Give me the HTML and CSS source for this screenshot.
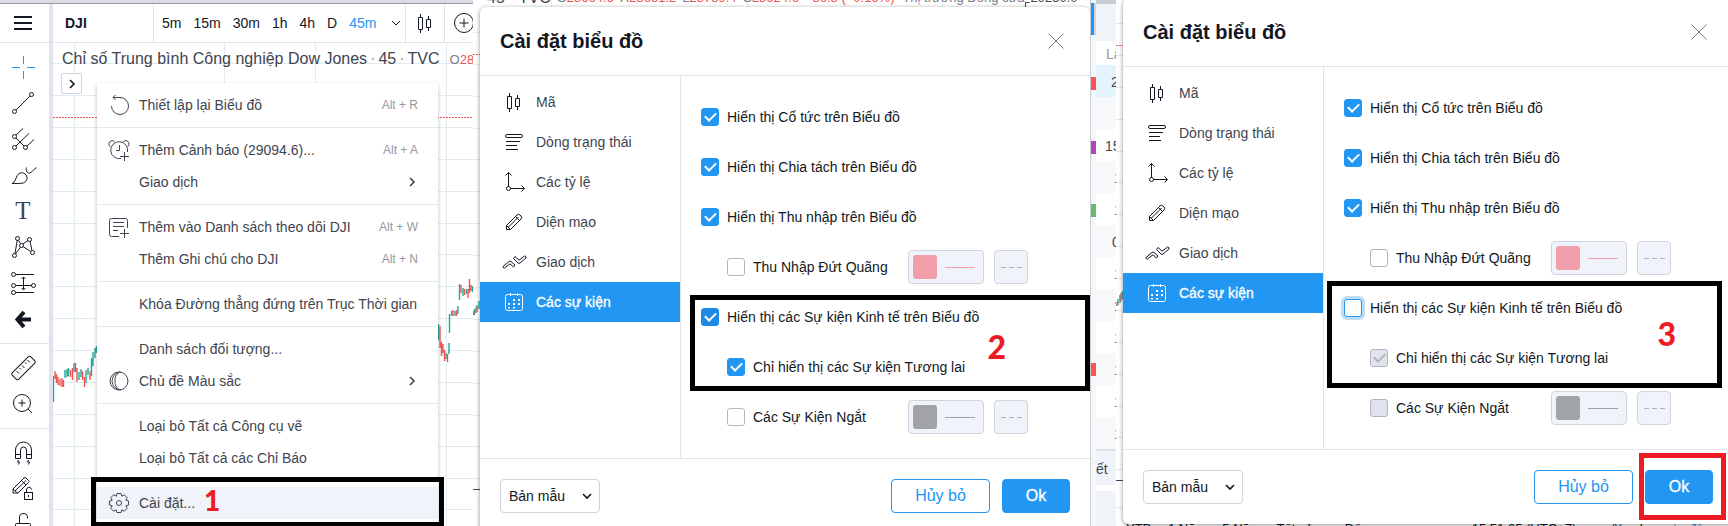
FILE: index.html
```html
<!DOCTYPE html>
<html lang="vi">
<head>
    <meta charset="UTF-8">
    <meta name="viewport" content="width=device-width, initial-scale=1.0">
    <title>Cài đặt biểu đồ</title>
    <link rel="stylesheet" href="styles.css">
</head>
<body>
    <!-- Icons -->
    <svg class="sprite" aria-hidden="true">
        <symbol id="i-candles" viewBox="0 0 28 28"><path d="M7.5 8.5h4v12h-4zM9.5 5v3.5M9.5 20.5V24M15.5 10.5h4v8h-4zM17.5 7v3.5M17.5 18.5V22"/></symbol>
        <symbol id="i-status" viewBox="0 0 28 28"><rect x="5.5" y="6.5" width="17" height="3" rx="1.5"/><path d="M6 13.5h14M6 17.5h11M6 21.5h12"/></symbol>
        <symbol id="i-scales" viewBox="0 0 28 28"><circle cx="8.5" cy="20.5" r="2"/><path d="M8.5 18.5V4.5M5.5 7.5l3-3 3 3M10.5 20.5h14M21.5 17.5l3 3-3 3"/></symbol>
        <symbol id="i-pencil" viewBox="0 0 28 28"><path d="M6.5 17.5L17 7q1.500-1.500 3 0l1 1q1.500 1.500 0 3L10.500 21.500H6.500zM8.500 19L18.500 9M15.500 8.500l4 4M6.500 17.500l4 4"/></symbol>
        <symbol id="i-trade" viewBox="0 0 28 28"><path d="M3 18.500l6-5q1-.8 2 0l4 3.500-1.500 2-3.500-3.200-5.500 4.200q-2 0-1.500-1.500zM13.500 10.500l1.500-2 4 3.700 5.500-4.200q2 0 1.500 2l-6 5q-1 .8-2 0z"/></symbol>
        <symbol id="i-calendar" viewBox="0 0 28 28"><rect x="5.500" y="6.500" width="17" height="16" rx="2"/><path d="M10.500 5v3M17.500 5v3"/><path class="dots" d="M13 11h2v2h-2zM18 11h2v2h-2zM8 15h2v2H8zM13 15h2v2h-2zM18 15h2v2h-2zM8 19h2v1.500H8zM13 19h2v1.500h-2z"/></symbol>
        <symbol id="i-down" viewBox="0 0 12 12"><path d="M2 4l4 4 4-4"/></symbol>
        <symbol id="i-right" viewBox="0 0 12 12"><path d="M4 2l4 4-4 4"/></symbol>
        <symbol id="i-close" viewBox="0 0 18 18"><path d="M1.500 1.500l15 15M16.500 1.500l-15 15"/></symbol>
        <symbol id="i-plus" viewBox="0 0 28 28"><circle cx="14" cy="14" r="9.500"/><path d="M14 9.500v9M9.500 14h9"/></symbol>

        <symbol id="i-cross" viewBox="0 0 28 28"><path d="M3 14.500h8M18 14.500h8M14.500 3v8M14.500 18v8"/></symbol>
        <symbol id="i-line" viewBox="0 0 28 28"><circle cx="5.500" cy="22.500" r="2"/><circle cx="22.500" cy="5.500" r="2"/><path d="M7 21L21 7"/></symbol>
        <symbol id="i-fork" viewBox="0 0 28 28"><circle cx="5.500" cy="11.500" r="2"/><circle cx="5.500" cy="22.500" r="2"/><circle cx="16.500" cy="22.500" r="2"/><path d="M7 10l7-6.500M7 21L20 8.500M18 21l7-6.500M7 13l8 8"/></symbol>
        <symbol id="i-brush" viewBox="0 0 28 28"><path d="M3 22.500c3-1.500 3.500-4 4.500-6.500C9 12 13 10.500 16 13s2.500 6 0 8c-2 1.700-5 1.500-13 1.500zM17.500 6.500c-1 3 .5 6 3 5.500s3-2.500 7-5.500"/></symbol>
        <symbol id="i-pattern" viewBox="0 0 28 28"><circle cx="8.500" cy="5.500" r="2"/><circle cx="20.500" cy="6.500" r="2"/><circle cx="12.500" cy="12.500" r="2"/><circle cx="5.500" cy="22.500" r="2"/><circle cx="23.500" cy="19.500" r="2"/><path d="M8.200 7.500L6 20.500M9.500 7.200l2 3.500M14 11l5-3.500M21 8.500l2 9M14.200 13.700l7.500 4.700M11.500 14.300l-5 6.500"/></symbol>
        <symbol id="i-range" viewBox="0 0 28 28"><circle cx="4.500" cy="5.500" r="2"/><circle cx="4.500" cy="16.500" r="2"/><circle cx="24.500" cy="16.500" r="2"/><circle cx="4.500" cy="23.500" r="2"/><path d="M6.500 5.500H25M6.500 16.500h16M6.500 23.500H25M14.500 8v12M12.500 10l2-2 2 2M12.500 19l2 2 2-2"/></symbol>
        <symbol id="i-back" viewBox="0 0 28 28"><path stroke-width="4" d="M22 14.500H9M15 7l-6.500 7.500L15 22"/></symbol>
        <symbol id="i-ruler" viewBox="0 0 28 28"><rect x="1.500" y="9.500" width="26" height="9" rx="1.500" transform="rotate(-45 14.500 14)"/><path d="M7.500 17l2.500 2.500M10.500 14l1.500 1.500M13 11.500l2.500 2.500M16 8.500l1.500 1.500M18.500 6l2.500 2.500"/></symbol>
        <symbol id="i-zoom" viewBox="0 0 28 28"><circle cx="13" cy="13" r="8.500"/><path d="M19 19l4 4M13 9.500v7M9.500 13h7"/></symbol>
        <symbol id="i-magnet" viewBox="0 0 28 28"><path d="M6.500 19.500V11a8 8 0 0 1 16 0v8.500h-5V11a3 3 0 0 0-6 0v8.500zM6.500 15.500h5M17.500 15.500h5M9.500 21l-1 2h2l-1 2.500M19.500 21l-1 2h2l-1 2.500"/></symbol>
        <symbol id="i-penlock" viewBox="0 0 28 28"><path d="M4 14L15 3q1-1 2 0l2.500 2.500q1 1 0 2L9 18H4zM6 16L17 5.500M4 14l4.500 4M12.500 5.500l4.500 4.500"/><rect x="15.500" y="17.500" width="8" height="7"/><path d="M17.500 17.500V15a2.500 2.500 0 0 1 5-.5M19.500 20v2"/></symbol>
        <symbol id="i-lock" viewBox="0 0 28 28"><rect x="6.500" y="12.500" width="15" height="11" rx="1"/><path d="M10.500 12.500V7a4 4 0 0 1 8-1v1.500"/></symbol>

        <symbol id="i-reset" viewBox="0 0 28 28"><path d="M8 6.500h7a8.500 8.500 0 1 1-8.500 8.500M10.500 4L8 6.500 10.500 9"/></symbol>
        <symbol id="i-alarm" viewBox="0 0 28 28"><path d="M16 22.500A8.500 8.500 0 1 1 22.500 16M14.500 9v5.500H11M5 10.500a3.300 3.300 0 1 1 4.500-5M18.500 5.500a3.300 3.300 0 1 1 4.500 5M19.500 16v9M15 20.500h9"/></symbol>
        <symbol id="i-list" viewBox="0 0 28 28"><path d="M14 23.500H6.500q-2 0-2-2v-14q0-2 2-2h14q2 0 2 2V15M8 9.500h11M8 13.500h11M8 17.500h5M19.500 16v9M15 20.500h9"/></symbol>
        <symbol id="i-theme" viewBox="0 0 28 28"><circle cx="14" cy="14" r="9"/><path d="M16 5a9 9 0 0 0 0 18M14 5.500a9 9 0 0 0-4 8.500 9 9 0 0 0 4 8.500"/></symbol>
        <symbol id="i-gear" viewBox="0 0 28 28"><circle cx="14" cy="14" r="2.500"/><path d="M12 4.500h4l.8 2.700 2.500-1.400 2.900 2.900-1.400 2.500 2.700.8v4l-2.700.8 1.400 2.500-2.900 2.900-2.500-1.400-.8 2.700h-4l-.8-2.700-2.500 1.400-2.900-2.900 1.400-2.500-2.700-.8v-4l2.700-.8-1.400-2.500 2.900-2.900 2.500 1.400z"/></symbol>
    </svg>

    <main class="steps">
        <!-- Step 1: context menu -->
        <section class="step step-menu">
            <div class="window-edge"></div>
            <div class="app">
                <aside class="tools">
                    <button class="menu-btn" aria-label="Menu"><span></span><span></span><span></span></button>
                    <div class="tool-group">
                        <button class="tool active" aria-label="Con trỏ"><svg class="icon"><use href="#i-cross"/></svg></button>
                        <button class="tool" aria-label="Đường xu hướng"><svg class="icon"><use href="#i-line"/></svg></button>
                        <button class="tool" aria-label="Pitchfork"><svg class="icon"><use href="#i-fork"/></svg></button>
                        <button class="tool" aria-label="Bút vẽ"><svg class="icon"><use href="#i-brush"/></svg></button>
                        <button class="tool tool-text">T</button>
                        <button class="tool" aria-label="Mẫu hình"><svg class="icon"><use href="#i-pattern"/></svg></button>
                        <button class="tool" aria-label="Dự báo"><svg class="icon"><use href="#i-range"/></svg></button>
                        <button class="tool" aria-label="Quay lại"><svg class="icon"><use href="#i-back"/></svg></button>
                    </div>
                    <div class="tool-group">
                        <button class="tool" aria-label="Thước đo"><svg class="icon"><use href="#i-ruler"/></svg></button>
                        <button class="tool" aria-label="Phóng to"><svg class="icon"><use href="#i-zoom"/></svg></button>
                    </div>
                    <div class="tool-group">
                        <button class="tool" aria-label="Nam châm"><svg class="icon"><use href="#i-magnet"/></svg></button>
                        <button class="tool" aria-label="Giữ chế độ vẽ"><svg class="icon"><use href="#i-penlock"/></svg></button>
                        <button class="tool" aria-label="Khóa"><svg class="icon"><use href="#i-lock"/></svg></button>
                    </div>
                </aside>

                <div class="workspace">
                    <header class="topbar">
                        <div class="symbol">DJI</div>
                        <nav class="intervals">
                            <a href="#">5m</a>
                            <a href="#">15m</a>
                            <a href="#">30m</a>
                            <a href="#">1h</a>
                            <a href="#">4h</a>
                            <a href="#">D</a>
                            <a href="#" class="current">45m</a>
                            <svg class="icon-small"><use href="#i-down"/></svg>
                        </nav>
                        <button class="topbar-btn" aria-label="Kiểu nến"><svg class="icon"><use href="#i-candles"/></svg></button>
                        <button class="topbar-btn compare" aria-label="So sánh"><svg class="icon"><use href="#i-plus"/></svg></button>
                    </header>

                    <div class="chart">
                        <svg class="chart-canvas" width="420" height="483" viewBox="53 43 420 483" aria-hidden="true">
                            <path class="grid" d="M53 63.500h420M53 95.500h420M53 127.500h420M53 159.500h420M53 191.500h420M53 223.500h420M53 254.500h420M53 286.500h420M53 318.500h420M53 350.500h420M53 382.500h420M53 414.500h420M53 446.500h420M53 478.500h420M53 509.500h420M74.500 43v483M224.500 43v483M315.500 43v483M446.500 43v483"/>
                            <path class="price-line" d="M53 117.500h420"/>
                            <path class="up" d="M53.500 376v26M65 370v8M67 369v8M68.500 368v8M74 363v9M79 372v8M81 369v8M86 370v13M88 368v7M91.500 358v18M93 352v14M95 348v10M96.500 346v7M438.500 324v16M446 353v6M449 343v11M449.500 314v19M451.500 311v5M455 311v5M458 306v8M459.500 284v16M463 288v8M466.500 289v5M472.500 286v6"/>
                            <path class="down" d="M55 371v8M56.500 374v9M58 377v8M60 379v7M62 378v9M63.500 380v7M70.500 370v7M72.500 368v12M75.500 363v9M77 368v14M82.500 371v9M84.500 377v10M90 371v9M440 326v22M441.500 342v14M443 344v9M444.500 350v11M447.500 354v8M453 310v6M456.500 310v6M461 285v8M464.500 289v6M468 289v9M469.500 279v14M471 285v6"/>
                        </svg>
                        <div class="legend">
                            <span>Chỉ số Trung bình Công nghiệp Dow Jones<i>·</i>45<i>·</i>TVC</span>
                            <span class="ohlc">O<b>28</b></span>
                        </div>
                        <button class="expand" aria-label="Mở rộng"><svg class="icon-small"><use href="#i-right"/></svg></button>
                    </div>
                </div>
            </div>

            <ul class="context-menu">
                <li><svg class="icon"><use href="#i-reset"/></svg><span>Thiết lập lại Biểu đồ</span><kbd>Alt + R</kbd></li>
                <li class="divider"></li>
                <li><svg class="icon"><use href="#i-alarm"/></svg><span>Thêm Cảnh báo (29094.6)...</span><kbd>Alt + A</kbd></li>
                <li><span>Giao dịch</span><svg class="icon-small"><use href="#i-right"/></svg></li>
                <li class="divider"></li>
                <li><svg class="icon"><use href="#i-list"/></svg><span>Thêm vào Danh sách theo dõi DJI</span><kbd>Alt + W</kbd></li>
                <li><span>Thêm Ghi chú cho DJI</span><kbd>Alt + N</kbd></li>
                <li class="divider"></li>
                <li><span>Khóa Đường thẳng đứng trên Trục Thời gian</span></li>
                <li class="divider"></li>
                <li><span>Danh sách đối tượng...</span></li>
                <li><svg class="icon"><use href="#i-theme"/></svg><span>Chủ đề Màu sắc</span><svg class="icon-small"><use href="#i-right"/></svg></li>
                <li class="divider"></li>
                <li><span>Loại bỏ Tất cả Công cụ vẽ</span></li>
                <li><span>Loại bỏ Tất cả các Chỉ Báo</span></li>
                <li class="divider"></li>
                <li class="hovered"><svg class="icon"><use href="#i-gear"/></svg><span>Cài đặt...</span></li>
            </ul>
            <div class="marker marker-1"><strong>1</strong></div>
        </section>

        <!-- Step 2: events are shown -->
        <section class="step step-on">
            <svg class="strip" width="623" height="526" viewBox="473 0 623 526" aria-hidden="true">
                <path class="grid" d="M473 32.500h7M473 64.500h7M473 96.500h7M473 128.500h7M473 159.500h7M473 191.500h7M473 223.500h7M473 255.500h7M473 287.500h7M473 319.500h7M473 351.500h7M473 383.500h7M473 415.500h7M473 446.500h7M473 478.500h7M551.500 0v8M662.500 0v8M747.500 0v8M843.500 0v8M942.500 0v8"/>
                <path class="price-line" d="M473 54.500h7"/>
                <path class="axis" d="M473 489.500h7M1025.500 8V2.500h4"/>
                <path class="up" d="M474.500 309v6M477 305v7M479 301v8"/>
                <path class="down" d="M473.500 311v4M476 307v6"/>
            </svg>
            <div class="quote">
                <span class="quote-symbol">45 · TVC</span>
                <span>O<b>28664.6</b></span>
                <span>H<b>28681.2</b></span>
                <span>L<b>28789.4</b></span>
                <span>C<b>28624.6</b></span>
                <span><b>−86.8 (−0.16%)</b></span>
                <span class="quote-state">• Thị trường Đóng cửa</span>
                <span class="quote-price">29250.0</span>
            </div>

            <div class="dialog">
                <header class="dialog-header">
                    <h2>Cài đặt biểu đồ</h2>
                    <button class="close" aria-label="Đóng"><svg><use href="#i-close"/></svg></button>
                </header>
                <div class="dialog-body">
                    <nav class="tabs">
                        <a href="#"><svg class="icon"><use href="#i-candles"/></svg>Mã</a>
                        <a href="#"><svg class="icon"><use href="#i-status"/></svg>Dòng trạng thái</a>
                        <a href="#"><svg class="icon"><use href="#i-scales"/></svg>Các tỷ lệ</a>
                        <a href="#"><svg class="icon"><use href="#i-pencil"/></svg>Diện mạo</a>
                        <a href="#"><svg class="icon"><use href="#i-trade"/></svg>Giao dịch</a>
                        <a href="#" class="selected"><svg class="icon"><use href="#i-calendar"/></svg>Các sự kiện</a>
                    </nav>
                    <div class="options">
                        <div class="option"><label><input type="checkbox" checked>Hiển thị Cổ tức trên Biểu đồ</label></div>
                        <div class="option"><label><input type="checkbox" checked>Hiển thị Chia tách trên Biểu đồ</label></div>
                        <div class="option"><label><input type="checkbox" checked>Hiển thị Thu nhập trên Biểu đồ</label></div>
                        <div class="option nested">
                            <label><input type="checkbox">Thu Nhập Đứt Quãng</label>
                            <button class="color pink" aria-label="Màu"><span></span></button>
                            <button class="dash" aria-label="Kiểu đường"></button>
                        </div>
                        <div class="option"><label><input type="checkbox" class="hover" checked>Hiển thị các Sự kiện Kinh tế trên Biểu đồ</label></div>
                        <div class="option nested"><label><input type="checkbox" checked>Chỉ hiển thị các Sự kiện Tương lai</label></div>
                        <div class="option nested">
                            <label><input type="checkbox">Các Sự Kiện Ngắt</label>
                            <button class="color gray" aria-label="Màu"><span></span></button>
                            <button class="dash" aria-label="Kiểu đường"></button>
                        </div>
                        <div class="marker marker-2"><strong>2</strong></div>
                    </div>
                </div>
                <footer class="dialog-footer">
                    <div class="template">
                        <select aria-label="Bản mẫu"><option>Bản mẫu</option></select>
                        <svg class="icon-small"><use href="#i-down"/></svg>
                    </div>
                    <button class="btn">Hủy bỏ</button>
                    <button class="btn btn-primary">Ok</button>
                </footer>
            </div>

            <div class="labels">
                <i class="scroll"></i>
                <i class="label red"></i>
                <i class="label purple"></i>
                <i class="label green"></i>
                <i class="label red low"></i>
            </div>
        </section>

        <!-- Step 3: events are hidden, confirm with Ok -->
        <section class="step step-off">
            <div class="watchlist">
                <div class="watch-head"></div>
                <div class="watch-title">La</div>
                <div class="watch-row current">2</div>
                <div class="watch-row"></div>
                <div class="watch-row wide">15</div>
                <div class="watch-row">1</div>
                <div class="watch-row">1</div>
                <div class="watch-row zero">0</div>
                <div class="watch-row">1</div>
                <div class="watch-row">1</div>
                <div class="watch-row">1</div>
                <div class="watch-row">1</div>
                <div class="watch-row">1</div>
                <div class="watch-row">1</div>
                <div class="watch-detail"><span>ết</span></div>
                <div class="watch-rest"></div>
            </div>
            <svg class="strip-narrow" width="7" height="526" viewBox="1116 0 7 526" aria-hidden="true">
                <path class="grid" d="M1116 23.500h7M1116 55.500h7M1116 87.500h7M1116 119.500h7M1116 151.500h7M1116 182.500h7M1116 214.500h7M1116 246.500h7M1116 278.500h7M1116 310.500h7M1116 342.500h7M1116 374.500h7M1116 406.500h7M1116 437.500h7M1116 469.500h7M1116 507.500h7"/>
                <path class="price-line" d="M1116 45.500h7"/>
                <path class="axis" d="M1116 480.500h7"/>
                <path class="up" d="M1118 299v6M1120 295v8M1122.500 291v8"/>
                <path class="down" d="M1117 302v4M1121 293v8"/>
            </svg>

            <div class="dialog">
                <header class="dialog-header">
                    <h2>Cài đặt biểu đồ</h2>
                    <button class="close" aria-label="Đóng"><svg><use href="#i-close"/></svg></button>
                </header>
                <div class="dialog-body">
                    <nav class="tabs">
                        <a href="#"><svg class="icon"><use href="#i-candles"/></svg>Mã</a>
                        <a href="#"><svg class="icon"><use href="#i-status"/></svg>Dòng trạng thái</a>
                        <a href="#"><svg class="icon"><use href="#i-scales"/></svg>Các tỷ lệ</a>
                        <a href="#"><svg class="icon"><use href="#i-pencil"/></svg>Diện mạo</a>
                        <a href="#"><svg class="icon"><use href="#i-trade"/></svg>Giao dịch</a>
                        <a href="#" class="selected"><svg class="icon"><use href="#i-calendar"/></svg>Các sự kiện</a>
                    </nav>
                    <div class="options">
                        <div class="option"><label><input type="checkbox" checked>Hiển thị Cổ tức trên Biểu đồ</label></div>
                        <div class="option"><label><input type="checkbox" checked>Hiển thị Chia tách trên Biểu đồ</label></div>
                        <div class="option"><label><input type="checkbox" checked>Hiển thị Thu nhập trên Biểu đồ</label></div>
                        <div class="option nested">
                            <label><input type="checkbox">Thu Nhập Đứt Quãng</label>
                            <button class="color pink" aria-label="Màu"><span></span></button>
                            <button class="dash" aria-label="Kiểu đường"></button>
                        </div>
                        <div class="option"><label><input type="checkbox" class="focused">Hiển thị các Sự kiện Kinh tế trên Biểu đồ</label></div>
                        <div class="option nested"><label><input type="checkbox" checked disabled>Chỉ hiển thị các Sự kiện Tương lai</label></div>
                        <div class="option nested">
                            <label><input type="checkbox" disabled>Các Sự Kiện Ngắt</label>
                            <button class="color gray" aria-label="Màu"><span></span></button>
                            <button class="dash" aria-label="Kiểu đường"></button>
                        </div>
                        <div class="marker marker-3"><strong>3</strong></div>
                    </div>
                </div>
                <footer class="dialog-footer">
                    <div class="template">
                        <select aria-label="Bản mẫu"><option>Bản mẫu</option></select>
                        <svg class="icon-small"><use href="#i-down"/></svg>
                    </div>
                    <button class="btn">Hủy bỏ</button>
                    <button class="btn btn-primary">Ok</button>
                    <div class="marker marker-ok"></div>
                </footer>
            </div>

            <div class="ranges">
                <span>YTD</span>
                <span>1 Năm</span>
                <span>5 Năm</span>
                <span>Tất cả</span>
                <span class="to">Đến</span>
                <span class="clock">15:51:25 (UTC+7)</span>
                <span class="percent">%</span>
                <span>log</span>
                <span class="auto">tự động</span>
            </div>
        </section>
    </main>
</body>
</html>
```

FILE: styles.css
```css
:root {
    --blue: #2196f3;
    --red: #ed1c24;
    --text: #131722;
    --text-soft: #40444f;
    --text-muted: #9598a1;
    --border: #e0e3eb;
    --border-dark: #d1d4dc;
    --grid: #e1ecf2;
    --hover: #f0f3fa;
    --up: #26a69a;
    --down: #ef5350;
}

* {
    margin: 0;
    padding: 0;
    box-sizing: border-box;
}

body {
    font-family: "Liberation Sans", Arial, sans-serif;
    font-size: 14px;
    line-height: 20px;
    color: var(--text);
    background: #fff;
    height: 100vh;
    overflow: hidden;
}

button {
    font: inherit;
    color: inherit;
    background: none;
    border: none;
}

a {
    color: inherit;
    text-decoration: none;
}

svg {
    display: block;
    fill: none;
    stroke: currentColor;
}

.sprite {
    position: absolute;
    width: 0;
    height: 0;
}

.icon {
    width: 28px;
    height: 28px;
    flex-shrink: 0;
}

.icon-small {
    width: 12px;
    height: 12px;
    flex-shrink: 0;
    stroke-width: 1.6;
}

.dots {
    fill: currentColor;
    stroke: none;
}

.steps {
    display: grid;
    grid-template-columns: 473fr 623fr 632fr;
    height: 100%;
}

.step {
    position: relative;
    overflow: hidden;
    min-width: 0;
    height: 100vh;
}

/* Chart drawing */
.grid { stroke: var(--grid); }
.up { stroke: var(--up); stroke-width: 1.4; }
.down { stroke: var(--down); stroke-width: 1.4; }
.axis { stroke: #434651; }

.price-line {
    stroke: var(--down);
    stroke-dasharray: 2 1;
}

/* Step 1 */
.window-edge {
    height: 4px;
    background: #dadbe3;
    border-bottom: 1px solid #96989f;
}

.app {
    display: flex;
    height: 100%;
}

.tools {
    width: 53px;
    border-right: 4px solid var(--border);
    flex-shrink: 0;
}

.menu-btn {
    display: flex;
    flex-direction: column;
    gap: 4px;
    width: 100%;
    height: 39px;
    padding: 12px 17px 0 14px;
    border-bottom: 1px solid var(--border);
}

.menu-btn span {
    height: 2px;
    background: var(--text);
}

.tool-group {
    padding: 6px 0;
    border-bottom: 1px solid var(--border);
}

.tool {
    display: flex;
    align-items: center;
    justify-content: center;
    width: 46px;
    height: 36px;
}

.tool.active {
    color: var(--blue);
}

.tool-text {
    font-family: "Liberation Serif", "Times New Roman", serif;
    font-size: 25px;
    color: var(--text-soft);
}

.workspace {
    flex: 1;
    min-width: 0;
    display: flex;
    flex-direction: column;
}

.topbar {
    display: flex;
    height: 39px;
    border-bottom: 1px solid var(--border);
    flex-shrink: 0;
}

.symbol {
    width: 101px;
    padding: 9px 12px;
    font-weight: bold;
    border-right: 1px solid var(--border);
    flex-shrink: 0;
}

.intervals {
    display: flex;
    align-items: center;
    gap: 12px;
    width: 252px;
    padding-left: 8px;
    border-right: 1px solid var(--border);
    flex-shrink: 0;
}

.intervals .icon-small {
    margin-left: 2px;
    stroke-width: 1;
}

.intervals .current {
    color: var(--blue);
}

.topbar-btn {
    width: 39px;
    padding-left: 5px;
    border-right: 1px solid var(--border);
    flex-shrink: 0;
}

.topbar-btn.compare {
    border-right: none;
}

.chart {
    position: relative;
    flex: 1;
    padding: 4px 8px;
}

.chart-canvas {
    position: absolute;
    left: 0;
    top: 0;
}

.legend {
    position: relative;
    display: flex;
    gap: 10px;
    padding-left: 1px;
    font-size: 16px;
    line-height: 24px;
    color: var(--text-soft);
    white-space: nowrap;
}

.legend i {
    margin: 0 3px;
    color: var(--text-muted);
}

.ohlc {
    font-size: 13px;
    line-height: 26px;
    color: #787b86;
}

.ohlc b,
.quote b {
    font-weight: normal;
    color: var(--down);
}

.expand {
    position: relative;
    display: flex;
    align-items: center;
    justify-content: center;
    width: 21px;
    height: 21px;
    background: #fff;
    border: 1px solid var(--border-dark);
    border-radius: 2px;
}

.context-menu {
    position: absolute;
    left: 97px;
    right: 35px;
    top: 83px;
    padding: 6px 0;
    list-style: none;
    color: var(--text-soft);
    background: #fff;
    border-radius: 2px;
    box-shadow: 0 2px 4px rgba(0, 0, 0, 0.25);
}

.context-menu li {
    display: grid;
    grid-template-columns: 28px 1fr auto;
    align-items: center;
    gap: 6px;
    height: 32px;
    padding: 0 20px 0 8px;
}

.context-menu span {
    grid-column: 2;
    white-space: nowrap;
}

.context-menu kbd {
    font: inherit;
    font-size: 12px;
    color: var(--text-muted);
}

.context-menu .divider {
    height: 1px;
    margin: 6px 0;
    background: var(--grid);
}

.context-menu .hovered {
    background: var(--hover);
}

/* Numbered frames over the screens */
.marker {
    position: absolute;
    border: 5px solid #000;
    pointer-events: none;
}

.marker strong {
    position: absolute;
    font-family: Lato, sans-serif;
    font-size: 32px;
    font-weight: 900;
    line-height: 32px;
    color: var(--red);
}

.marker-1 {
    left: 91px;
    right: 29px;
    top: 477px;
    height: 50px;
}

.marker-1 strong {
    left: 108px;
    top: 2px;
    font-size: 28px;
}

.marker-2 {
    left: 9px;
    right: 0;
    top: 219px;
    height: 96px;
}

.marker-2 strong {
    right: 79px;
    top: 31px;
}

.marker-3 {
    left: 3px;
    right: 11px;
    top: 214px;
    height: 107px;
}

.marker-3 strong {
    right: 41px;
    top: 32px;
}

.marker-ok {
    right: 7px;
    top: 3px;
    width: 87px;
    height: 67px;
    border-color: var(--red);
}

/* Dialog */
.dialog {
    position: relative;
    flex: 1;
    min-width: 0;
    align-self: flex-start;
    background: #fff;
    border-radius: 6px;
    box-shadow: 0 1px 4px rgba(0, 0, 0, 0.45);
}

.dialog-header {
    display: flex;
    align-items: center;
    justify-content: space-between;
    height: 69px;
    padding: 0 25px 0 20px;
    border-bottom: 1px solid var(--border);
}

.dialog-header h2 {
    font-size: 20px;
    line-height: 28px;
}

.close,
.close svg {
    width: 18px;
    height: 18px;
    color: #787b86;
}

.dialog-body {
    display: flex;
    height: 382px;
}

.tabs {
    width: 201px;
    padding-top: 6px;
    border-right: 1px solid var(--border);
    flex-shrink: 0;
}

.tabs a {
    display: flex;
    align-items: center;
    gap: 8px;
    height: 40px;
    padding-left: 20px;
    color: var(--text-soft);
}

.tabs .icon {
    color: var(--text);
}

.tabs .selected,
.tabs .selected .icon {
    color: #fff;
}

.tabs .selected {
    background: var(--blue);
    -webkit-text-stroke: 0.3px #fff;
}

.options {
    position: relative;
    flex: 1;
    padding: 16px 0 0 20px;
}

.option {
    display: flex;
    align-items: center;
    gap: 10px;
    height: 50px;
}

.option label {
    display: flex;
    align-items: center;
    gap: 8px;
    white-space: nowrap;
}

.nested label {
    width: 197px;
    padding-left: 26px;
}

.option input {
    appearance: none;
    display: grid;
    place-items: center;
    width: 18px;
    height: 18px;
    flex-shrink: 0;
    background: #fff;
    border: 1px solid #b2b5be;
    border-radius: 3px;
}

.option input:checked {
    background: var(--blue);
    border-color: var(--blue);
}

.option input:checked::after {
    content: "";
    width: 5px;
    height: 9px;
    margin-bottom: 3px;
    border: solid #fff;
    border-width: 0 2px 2px 0;
    transform: rotate(45deg);
}

.option input.hover {
    background: #1e88e5;
    border-color: #1e88e5;
}

.option input.focused {
    border-color: var(--blue);
    box-shadow: 0 0 0 3px #bbdefb;
}

.option input:disabled {
    background: var(--border);
    border-color: #b2b5be;
}

.option input:disabled::after {
    border-color: #b2b5be;
}

.color,
.dash {
    display: flex;
    align-items: center;
    height: 34px;
    background: var(--hover);
    border: 1px solid var(--border-dark);
    border-radius: 4px;
}

.color {
    gap: 8px;
    width: 76px;
    padding: 0 4px;
}

.color span {
    width: 24px;
    height: 24px;
    background: currentColor;
    border-radius: 3px;
}

.color::after {
    content: "";
    width: 30px;
    height: 1px;
    background: currentColor;
}

.color.pink { color: #ef9eaa; }
.color.gray { color: #a2a3a7; }

.dash {
    width: 34px;
    justify-content: center;
}

.dash::after {
    content: "";
    width: 21px;
    height: 1px;
    background: repeating-linear-gradient(90deg, #b2b5be 0 5px, transparent 5px 8px);
}

.dialog-footer {
    position: relative;
    display: flex;
    align-items: center;
    gap: 12px;
    height: 75px;
    padding: 0 20px;
    border-top: 1px solid var(--border);
}

.template {
    display: grid;
    align-items: center;
    width: 100px;
    margin-right: auto;
}

.template select,
.template .icon-small {
    grid-area: 1 / 1;
}

.template select {
    appearance: none;
    width: 100px;
    height: 34px;
    padding-left: 8px;
    font: inherit;
    color: var(--text);
    background: #fff;
    border: 1px solid var(--border-dark);
    border-radius: 4px;
}

.template .icon-small {
    justify-self: end;
    margin-right: 7px;
    pointer-events: none;
}

.btn {
    width: 99px;
    height: 34px;
    font-size: 16px;
    color: var(--blue);
    border: 1px solid var(--blue);
    border-radius: 4px;
}

.btn-primary {
    width: 68px;
    color: #fff;
    background: var(--blue);
    -webkit-text-stroke: 0.3px #fff;
}

/* Step 2 */
.step-on {
    display: flex;
    padding: 7px 0 0 7px;
}

.strip {
    position: absolute;
    left: 0;
    top: 0;
}

.quote {
    position: absolute;
    left: 14px;
    right: 20px;
    top: -12px;
    display: flex;
    gap: 6px;
    font-size: 13px;
    line-height: 20px;
    color: #787b86;
    white-space: nowrap;
}

.quote-symbol {
    width: 64px;
    font-size: 16px;
    color: var(--text-soft);
}

.quote-state {
    margin-left: -6px;
}

.quote-price {
    margin-left: auto;
    color: #434651;
}

.labels {
    position: relative;
    width: 6px;
    margin-top: -7px;
    background: #f5f6f8;
    border-left: 1px solid #c9ccd3;
}

.labels i {
    position: absolute;
    left: 0;
    right: 0;
    height: 13px;
}

.labels .scroll {
    top: 3px;
    height: 32px;
    background: linear-gradient(90deg, var(--blue) 3px, var(--border-dark) 3px);
}

.label.red { top: 77px; background: #ff5252; }
.label.purple { top: 141px; background: #ab47bc; }
.label.green { top: 204px; background: #66bb6a; }
.label.red.low { top: 363px; }

/* Step 3 */
.step-off {
    display: flex;
}

.step-off .dialog {
    margin: -2px -5px 0 0;
}

.strip-narrow {
    flex-shrink: 0;
}

.watchlist {
    width: 20px;
    overflow: hidden;
    flex-shrink: 0;
    color: #434651;
}

.watch-head {
    height: 41px;
    background: var(--hover);
    border-top: 4px solid #c9cbd3;
}

.watch-title {
    height: 24px;
    padding: 3px 0 0 10px;
    color: var(--text-muted);
}

.watch-row {
    height: 32px;
    padding: 7px 0 0 18px;
}

.watch-row:nth-child(even) {
    background: #f7f8fa;
}

.watch-row.current {
    padding-left: 15px;
    background: #e3f4fd;
}

.watch-row.wide {
    padding-left: 9px;
}

.watch-row.zero {
    padding-left: 16px;
}

.watch-detail {
    height: 36px;
    padding: 8px 0 0 0;
    background: var(--hover);
    border-top: 2px solid var(--border);
}

.watch-rest {
    height: 40px;
    margin-top: 6px;
    background: var(--hover);
}

.ranges {
    position: absolute;
    left: 30px;
    right: 10px;
    top: 519px;
    z-index: -1;
    display: flex;
    gap: 16px;
    font-size: 13px;
    white-space: nowrap;
}

.ranges .to {
    margin-left: 16px;
}

.ranges .clock {
    margin-left: auto;
}

.ranges .percent {
    margin-left: 20px;
}

.ranges .auto {
    color: var(--blue);
}
```
